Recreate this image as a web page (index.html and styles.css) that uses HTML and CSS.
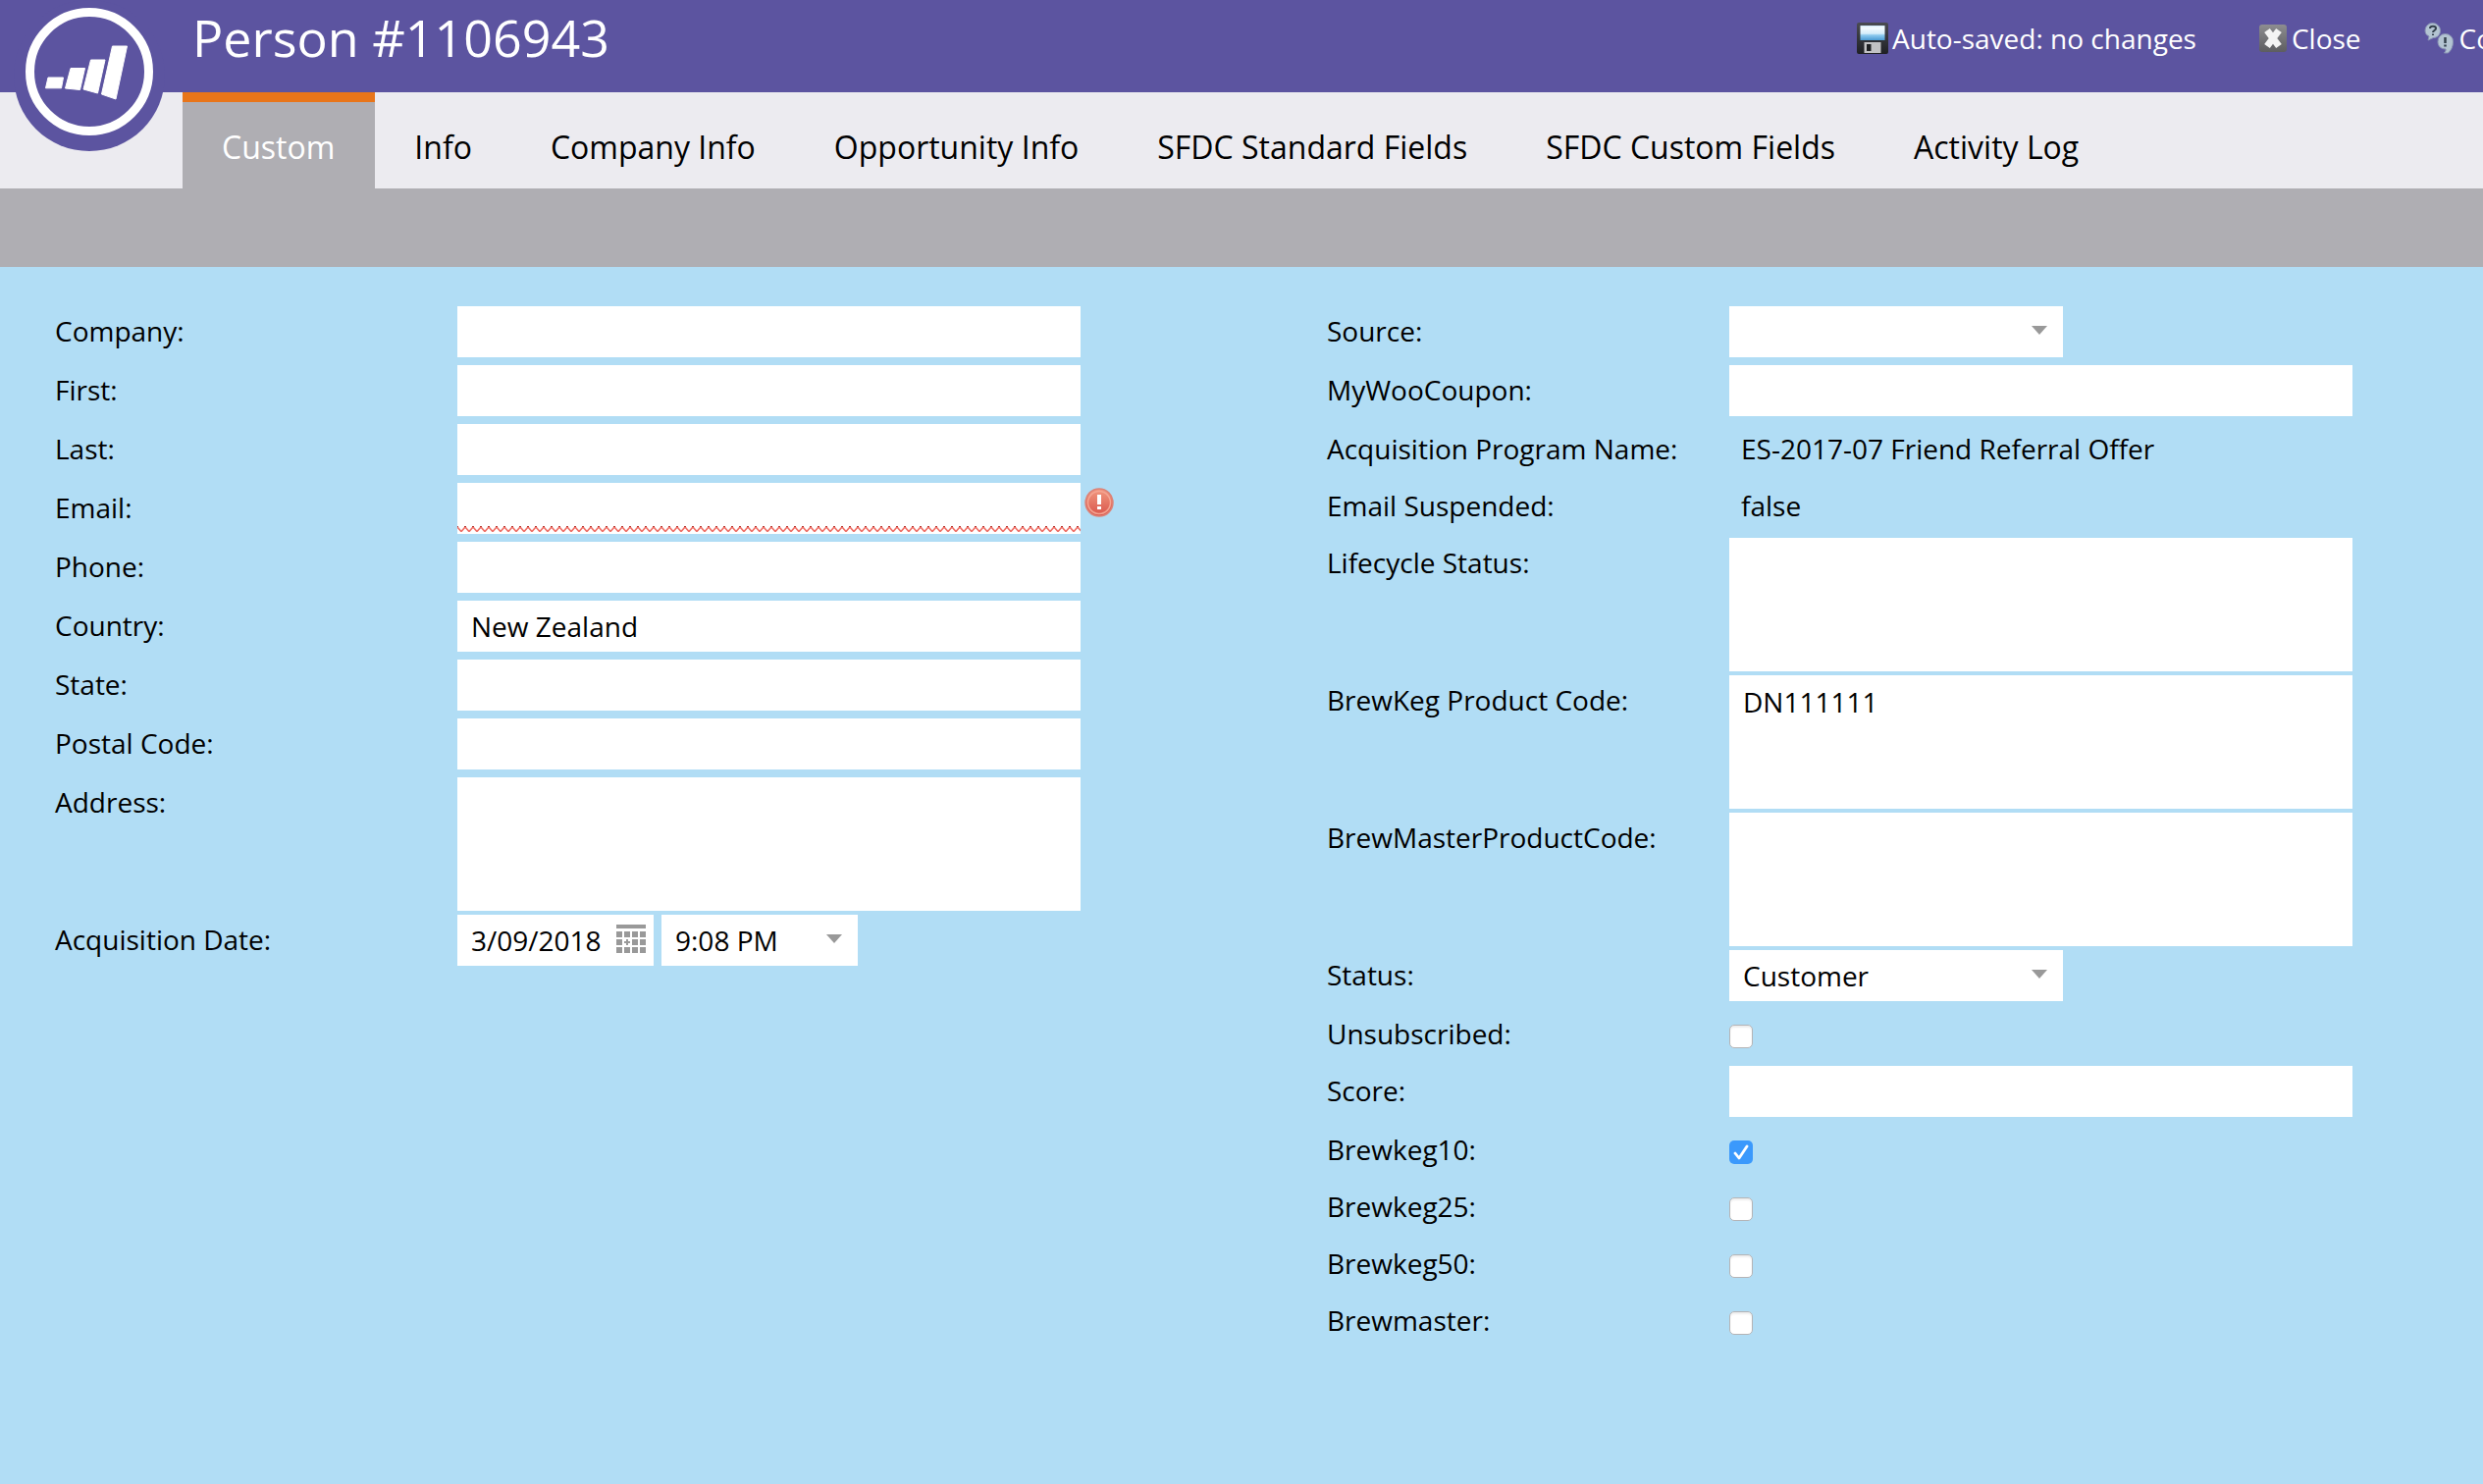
FILE: index.html
```html
<!DOCTYPE html>
<html lang="en">
<head>
    <meta charset="utf-8">
    <title>Person #1106943</title>
    <link rel="stylesheet" href="styles.css">
</head>
<body>
    <header class="header">
        <svg class="logo" width="160" height="156" viewBox="0 0 160 156">
            <circle cx="80" cy="77" r="77" fill="#5c54a0"/>
            <circle cx="80" cy="73" r="60.5" fill="none" stroke="#fff" stroke-width="9"/>
            <g fill="#fff" stroke="#fff" stroke-width="1" stroke-linejoin="round">
                <path d="M38 79h15.5l-2 10.8H35.5z"/>
                <path d="M61 69.5h14.5l-5 22-15-1.5z"/>
                <path d="M81.5 61H96l-7.500 34-14.500-4z"/>
                <path d="M103.5 47h15L107 101l-14.500-5z"/>
            </g>
        </svg>
        <h1 class="title">Person #1106943</h1>
        <nav class="actions">
            <a class="action">
                <svg width="32" height="32" viewBox="0 0 32 32">
                    <defs>
                        <linearGradient id="disk" x1="0" y1="0" x2="0" y2="1">
                            <stop offset="0" stop-color="#cfeafa"/>
                            <stop offset="0.15" stop-color="#f6fcff"/>
                            <stop offset="0.55" stop-color="#d5edfa"/>
                            <stop offset="0.65" stop-color="#8fcbef"/>
                            <stop offset="1" stop-color="#4a9bd3"/>
                        </linearGradient>
                        <linearGradient id="case" x1="0" y1="0" x2="0" y2="1">
                            <stop offset="0" stop-color="#4a4b52"/>
                            <stop offset="1" stop-color="#1f2024"/>
                        </linearGradient>
                    </defs>
                    <rect width="32" height="32" rx="2" fill="url(#case)"/>
                    <rect x="3.500" y="3" width="25" height="15" fill="url(#disk)"/>
                    <rect x="7.500" y="20" width="17" height="11" fill="#c2c2c4"/>
                    <rect x="10" y="22" width="4.500" height="7" fill="#1e1f22"/>
                </svg>
                <span>Auto-saved: no changes</span>
            </a>
            <a class="action action-close">
                <svg width="28" height="28" viewBox="0 0 28 28">
                    <defs>
                        <linearGradient id="close" x1="0" y1="0" x2="0" y2="1">
                            <stop offset="0" stop-color="#8d8d90"/>
                            <stop offset="1" stop-color="#5d5d60"/>
                        </linearGradient>
                    </defs>
                    <rect width="28" height="28" rx="3" fill="url(#close)"/>
                    <path d="M8 6l12 16M20 6L8 22" stroke="#f4f4f4" stroke-width="7"/>
                </svg>
                <span>Close</span>
            </a>
            <a class="action">
                <svg width="32" height="32" viewBox="0 0 32 32">
                    <path d="M8.500 0.500a8 7.500 0 0 1 8 7.500c0 5-3.500 7.500-7 7.500L4 18l1-4C2.500 13 1 11 1 8a7.500 7.500 0 0 1 7.500-7.500z" fill="#b3c4d2" stroke="#8791b3"/>
                    <path d="M21.500 11.500a8 7.500 0 0 1 8 8c0 5-2 9-5 11.500h-4c1-1 2-3 1.500-4-5 0-8-3-8-7.500a7.500 7.500 0 0 1 7.500-8z" fill="#b3c4d2" stroke="#8791b3"/>
                    <path d="M6 6c0-3 6-3 6 0 0 2-3 2-3 4M9 11.500v1.500" fill="none" stroke="#33404c" stroke-width="2"/>
                    <path d="M21.500 15v6M21.500 22.500v2" fill="none" stroke="#33404c" stroke-width="2.500"/>
                </svg>
                <span>Community</span>
            </a>
        </nav>
    </header>

    <nav class="tabs">
        <a class="tab active">Custom</a>
        <a class="tab">Info</a>
        <a class="tab">Company Info</a>
        <a class="tab">Opportunity Info</a>
        <a class="tab">SFDC Standard Fields</a>
        <a class="tab">SFDC Custom Fields</a>
        <a class="tab">Activity Log</a>
    </nav>
    <div class="toolbar"></div>

    <form class="form">
        <div class="column">
            <div class="row">
                <label class="form-label" for="company">Company:</label>
                <input type="text" class="form-control" id="company">
            </div>
            <div class="row">
                <label class="form-label" for="first">First:</label>
                <input type="text" class="form-control" id="first">
            </div>
            <div class="row">
                <label class="form-label" for="last">Last:</label>
                <input type="text" class="form-control" id="last">
            </div>
            <div class="row">
                <label class="form-label" for="email">Email:</label>
                <div class="invalid">
                    <input type="text" class="form-control" id="email">
                    <svg class="squiggle" width="635" height="6">
                        <defs>
                            <pattern id="wave" width="8" height="6" patternUnits="userSpaceOnUse">
                                <path d="M-1 0L4 5.500 9 0" fill="none" stroke="#ef6f66" stroke-width="1.700"/>
                                <path d="M0 0h1v1H0zM7 0h1v1H7z" fill="#b5352c"/>
                            </pattern>
                        </defs>
                        <rect width="635" height="6" fill="url(#wave)"/>
                    </svg>
                </div>
                <svg class="error-icon" width="30" height="30" viewBox="0 0 30 30">
                    <defs>
                        <linearGradient id="err" x1="0" y1="0" x2="0" y2="1">
                            <stop offset="0" stop-color="#f19a80"/>
                            <stop offset="1" stop-color="#d9534a"/>
                        </linearGradient>
                    </defs>
                    <circle cx="15" cy="15" r="14" fill="url(#err)" stroke="#dc8378" stroke-width="1.500"/>
                    <circle cx="15" cy="15" r="11.500" fill="none" stroke="#f4a593" stroke-width="1.500"/>
                    <path d="M13 7h4v10h-4zM13 19h4v3h-4z" fill="#fff"/>
                </svg>
            </div>
            <div class="row">
                <label class="form-label" for="phone">Phone:</label>
                <input type="text" class="form-control" id="phone">
            </div>
            <div class="row">
                <label class="form-label" for="country">Country:</label>
                <input type="text" class="form-control" id="country" value="New Zealand">
            </div>
            <div class="row">
                <label class="form-label" for="state">State:</label>
                <input type="text" class="form-control" id="state">
            </div>
            <div class="row">
                <label class="form-label" for="postal">Postal Code:</label>
                <input type="text" class="form-control" id="postal">
            </div>
            <div class="row row-area">
                <label class="form-label" for="address">Address:</label>
                <textarea class="form-control" id="address"></textarea>
            </div>
            <div class="row">
                <label class="form-label">Acquisition Date:</label>
                <div class="select date">
                    <span>3/09/2018</span>
                    <svg width="30" height="30" viewBox="0 0 30 30" fill="#999">
                        <path d="M0 0h30v4H0zM0 7h6v6H0zM8 7h6v6H8zM16 7h6v6h-6zM24 7h6v6h-6zM0 15h6v6H0zM10 15h2v2h2v2h-2v2h-2v-2H8v-2h2zM16 15h6v6h-6zM24 15h6v6h-6zM0 23h6v6H0zM8 23h6v6H8zM16 23h6v6h-6zM24 23h6v6h-6z"/>
                    </svg>
                </div>
                <div class="select time">
                    <span>9:08 PM</span>
                    <i class="arrow"></i>
                </div>
            </div>
        </div>

        <div class="column">
            <div class="row">
                <label class="form-label">Source:</label>
                <div class="select"><span></span><i class="arrow"></i></div>
            </div>
            <div class="row">
                <label class="form-label" for="coupon">MyWooCoupon:</label>
                <input type="text" class="form-control" id="coupon">
            </div>
            <div class="row row-text">
                <label class="form-label">Acquisition Program Name:</label>
                <span class="form-text">ES-2017-07 Friend Referral Offer</span>
            </div>
            <div class="row row-text">
                <label class="form-label">Email Suspended:</label>
                <span class="form-text">false</span>
            </div>
            <div class="row row-area">
                <label class="form-label" for="lifecycle">Lifecycle Status:</label>
                <textarea class="form-control" id="lifecycle"></textarea>
            </div>
            <div class="row row-area">
                <label class="form-label" for="brewkeg">BrewKeg Product Code:</label>
                <textarea class="form-control" id="brewkeg">DN111111</textarea>
            </div>
            <div class="row row-area">
                <label class="form-label" for="brewmastercode">BrewMasterProductCode:</label>
                <textarea class="form-control" id="brewmastercode"></textarea>
            </div>
            <div class="row">
                <label class="form-label">Status:</label>
                <div class="select"><span>Customer</span><i class="arrow"></i></div>
            </div>
            <div class="row row-text">
                <label class="form-label" for="unsubscribed">Unsubscribed:</label>
                <input type="checkbox" class="checkbox" id="unsubscribed">
            </div>
            <div class="row">
                <label class="form-label" for="score">Score:</label>
                <input type="text" class="form-control" id="score">
            </div>
            <div class="row row-text">
                <label class="form-label">Brewkeg10:</label>
                <svg class="checked" width="24" height="24" viewBox="0 0 24 24">
                    <rect width="24" height="24" rx="5" fill="#3b99fc"/>
                    <path d="M6 13l4 5 8-12" fill="none" stroke="#fff" stroke-width="2.800" stroke-linecap="round" stroke-linejoin="round"/>
                </svg>
            </div>
            <div class="row row-text">
                <label class="form-label" for="brewkeg25">Brewkeg25:</label>
                <input type="checkbox" class="checkbox" id="brewkeg25">
            </div>
            <div class="row row-text">
                <label class="form-label" for="brewkeg50">Brewkeg50:</label>
                <input type="checkbox" class="checkbox" id="brewkeg50">
            </div>
            <div class="row row-text">
                <label class="form-label" for="brewmaster">Brewmaster:</label>
                <input type="checkbox" class="checkbox" id="brewmaster">
            </div>
        </div>
    </form>
</body>
</html>
```
FILE: styles.css
```css
* {
    box-sizing: border-box;
}

body {
    margin: 0;
    height: 100vh;
    overflow: hidden;
    background-color: #b1ddf5;
    font-family: "Open Sans", sans-serif;
    font-size: 28px;
    line-height: 38px;
    color: #000;
}

.header {
    position: relative;
    display: flex;
    height: 94px;
    padding-left: 196px;
    background-color: #5c54a0;
    color: #fff;
}

/* hangs over the tab bar */
.logo {
    position: absolute;
    left: 11px;
    top: 0;
}

.title {
    margin: 0;
    font-size: 52px;
    font-weight: 400;
    line-height: 76px;
    white-space: nowrap;
}

.actions {
    display: flex;
    gap: 64px;
    width: 638px;
    margin-left: auto;
    padding-top: 20px;
    overflow: hidden;
    white-space: nowrap;
}

.action {
    display: flex;
    flex: none;
    gap: 4px;
}

.action svg {
    margin-top: 3px;
}

.action-close {
    gap: 5px;
}

.action-close svg {
    margin-top: 5px;
}

.tabs {
    display: flex;
    height: 98px;
    padding-left: 186px;
    background-color: #ecebf0;
    font-size: 32px;
}

.tab {
    padding: 24px 40px 0;
    border-top: 10px solid transparent;
    line-height: 44px;
    white-space: nowrap;
}

.tab.active {
    padding-right: 41px;
    background-color: #afaeb3;
    border-top-color: #e8751a;
    color: #fff;
}

.toolbar {
    height: 80px;
    background-color: #afaeb3;
}

.form {
    display: flex;
    padding: 40px 0 0 56px;
}

.column {
    flex: none;
    width: 1296px;
}

.row {
    display: flex;
    height: 60px;
}

.row-text {
    height: 58px;
}

.row-area {
    height: 140px;
}

.form-label {
    flex: none;
    width: 410px;
    padding-top: 6px;
}

.form-control {
    display: block;
    width: 635px;
    height: 52px;
    margin: 0;
    padding: 0 14px;
    border: none;
    border-radius: 0;
    background-color: #fff;
    color: #000;
    font: inherit;
    outline: none;
    resize: none;
}

textarea.form-control {
    height: 136px;
    padding-top: 8px;
}

.form-text {
    padding: 6px 0 0 12px;
}

.invalid {
    position: relative;
}

.squiggle {
    position: absolute;
    left: 0;
    bottom: 10px;
}

.error-icon {
    margin: 5px 0 0 4px;
}

.select {
    display: flex;
    justify-content: space-between;
    width: 340px;
    height: 52px;
    padding: 7px 14px 0;
    background-color: #fff;
    white-space: nowrap;
}

.date {
    width: 200px;
    padding-right: 8px;
}

.date svg {
    margin-top: 3px;
}

.time {
    width: 200px;
    margin-left: 8px;
}

.arrow {
    width: 0;
    height: 0;
    margin: 13px 2px 0 0;
    border: 8px solid transparent;
    border-top: 9px solid #999;
    border-bottom: none;
}

.checkbox {
    appearance: none;
    width: 24px;
    height: 24px;
    margin: 16px 0 0;
    border: 1.5px solid #b4b4b6;
    border-radius: 5px;
    background-color: #fff;
    box-shadow: inset 0 2px 2px #eee;
}

.checked {
    margin-top: 16px;
}
```
